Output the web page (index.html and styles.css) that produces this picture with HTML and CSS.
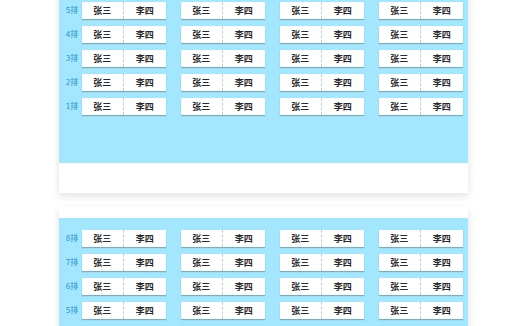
FILE: index.html
```html
<!DOCTYPE html>
<html>
<head>
<meta charset="utf-8">
<link rel="stylesheet" href="styles.css">
</head>
<body>
<div class="page">
  <div class="card">
    <div class="card-head"></div>
    <div class="hall">
      <div class="row"><span class="label">5排</span><div class="pair"><span>张三</span><span>李四</span></div><div class="pair"><span>张三</span><span>李四</span></div><div class="pair"><span>张三</span><span>李四</span></div><div class="pair"><span>张三</span><span>李四</span></div></div>
      <div class="row"><span class="label">4排</span><div class="pair"><span>张三</span><span>李四</span></div><div class="pair"><span>张三</span><span>李四</span></div><div class="pair"><span>张三</span><span>李四</span></div><div class="pair"><span>张三</span><span>李四</span></div></div>
      <div class="row"><span class="label">3排</span><div class="pair"><span>张三</span><span>李四</span></div><div class="pair"><span>张三</span><span>李四</span></div><div class="pair"><span>张三</span><span>李四</span></div><div class="pair"><span>张三</span><span>李四</span></div></div>
      <div class="row"><span class="label">2排</span><div class="pair"><span>张三</span><span>李四</span></div><div class="pair"><span>张三</span><span>李四</span></div><div class="pair"><span>张三</span><span>李四</span></div><div class="pair"><span>张三</span><span>李四</span></div></div>
      <div class="row"><span class="label">1排</span><div class="pair"><span>张三</span><span>李四</span></div><div class="pair"><span>张三</span><span>李四</span></div><div class="pair"><span>张三</span><span>李四</span></div><div class="pair"><span>张三</span><span>李四</span></div></div>
    </div>
    <div class="card-foot"></div>
  </div>
  <div class="card">
    <div class="card-head"></div>
    <div class="hall">
      <div class="row"><span class="label">8排</span><div class="pair"><span>张三</span><span>李四</span></div><div class="pair"><span>张三</span><span>李四</span></div><div class="pair"><span>张三</span><span>李四</span></div><div class="pair"><span>张三</span><span>李四</span></div></div>
      <div class="row"><span class="label">7排</span><div class="pair"><span>张三</span><span>李四</span></div><div class="pair"><span>张三</span><span>李四</span></div><div class="pair"><span>张三</span><span>李四</span></div><div class="pair"><span>张三</span><span>李四</span></div></div>
      <div class="row"><span class="label">6排</span><div class="pair"><span>张三</span><span>李四</span></div><div class="pair"><span>张三</span><span>李四</span></div><div class="pair"><span>张三</span><span>李四</span></div><div class="pair"><span>张三</span><span>李四</span></div></div>
      <div class="row"><span class="label">5排</span><div class="pair"><span>张三</span><span>李四</span></div><div class="pair"><span>张三</span><span>李四</span></div><div class="pair"><span>张三</span><span>李四</span></div><div class="pair"><span>张三</span><span>李四</span></div></div>
      <div class="row"><span class="label">4排</span><div class="pair"><span>张三</span><span>李四</span></div><div class="pair"><span>张三</span><span>李四</span></div><div class="pair"><span>张三</span><span>李四</span></div><div class="pair"><span>张三</span><span>李四</span></div></div>
    </div>
  </div>
</div>
</body>
</html>
```
FILE: styles.css
```css
html, body {
  margin: 0;
  padding: 0;
  background: #ffffff;
  overflow: hidden;
}
.page {
  margin-top: -21px;
  display: flex;
  flex-direction: column;
  align-items: center;
  gap: 14px;
  font-family: "Noto Sans CJK SC", "Noto Sans", sans-serif;
}
.card {
  width: 409px;
  background: #ffffff;
  box-shadow: 0 3px 8px rgba(0, 0, 0, 0.12);
}
.card-head {
  height: 11px;
  background: #ffffff;
}
.hall {
  background: #a2e7fd;
  padding: 11px 5px 48px 0;
  display: flex;
  flex-direction: column;
  gap: 6px;
}
.card-foot {
  height: 30px;
  background: #ffffff;
}
.row {
  display: flex;
  align-items: center;
  height: 18px;
  gap: 15px;
}
.label {
  width: 23px;
  margin-right: -15px;
  text-align: center;
  font-size: 8px;
  color: #2f8fd4;
  line-height: 18px;
  padding-left: 4px;
  box-sizing: border-box;
}
.pair {
  width: 84px;
  height: 17px;
  display: flex;
  background: #ffffff;
  box-shadow: 0 1px 1px rgba(0, 0, 0, 0.25);
}
.pair span {
  flex: 1;
  text-align: center;
  font-size: 9px;
  font-weight: 700;
  color: #2a2a2a;
  line-height: 17px;
}
.pair span + span {
  border-left: 1px dashed #c8c8c8;
}
```
